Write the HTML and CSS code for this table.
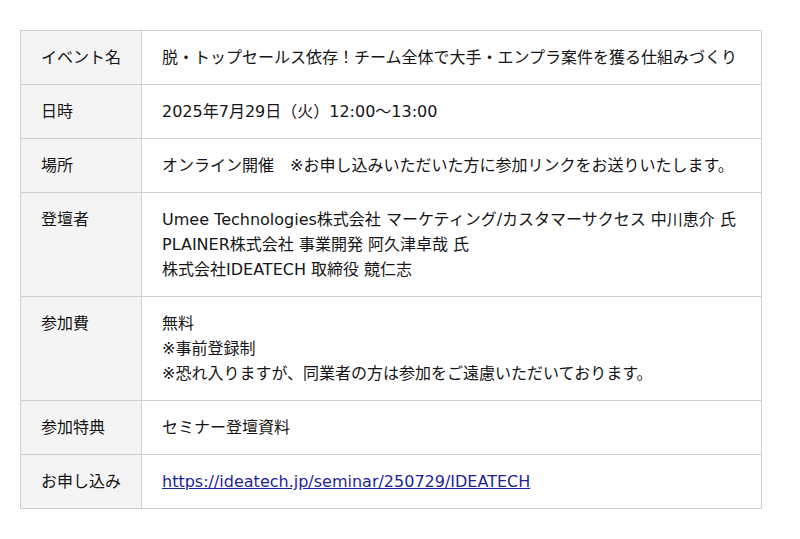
FILE: index.html
```html
<!DOCTYPE html>
<html lang="ja">
<head>
	<meta charset="UTF-8">
	<title>セミナー概要</title>
	<link rel="stylesheet" href="styles.css">
</head>
<body>
	<table class="outline">
		<tr>
			<th>イベント名</th>
			<td>脱・トップセールス依存！チーム全体で大手・エンプラ案件を獲る仕組みづくり</td>
		</tr>
		<tr>
			<th>日時</th>
			<td>2025年7月29日（火）12:00〜13:00</td>
		</tr>
		<tr>
			<th>場所</th>
			<td>オンライン開催　※お申し込みいただいた方に参加リンクをお送りいたします。</td>
		</tr>
		<tr>
			<th>登壇者</th>
			<td>Umee Technologies株式会社 マーケティング/カスタマーサクセス 中川恵介 氏<br>PLAINER株式会社 事業開発 阿久津卓哉 氏<br>株式会社IDEATECH 取締役 競仁志</td>
		</tr>
		<tr>
			<th>参加費</th>
			<td>無料<br>※事前登録制<br>※恐れ入りますが、同業者の方は参加をご遠慮いただいております。</td>
		</tr>
		<tr>
			<th>参加特典</th>
			<td>セミナー登壇資料</td>
		</tr>
		<tr>
			<th>お申し込み</th>
			<td><a href="#">https://ideatech.jp/seminar/250729/IDEATECH</a></td>
		</tr>
	</table>
</body>
</html>
```

FILE: styles.css
```css
*{
	margin: 0;
	padding: 0;
	box-sizing: border-box;
}
body{
	background: #fff;
	padding: 30px 20px;
	font-family: "DejaVu Sans", "Noto Sans CJK JP", sans-serif;
	font-size: 16px;
	line-height: 25px;
	color: #151515;
}
.outline{
	table-layout: fixed;
	width: 742px;
	border-collapse: collapse;
}
.outline th, .outline td{
	border: 1px solid #cfcfcf;
	padding: 14px 20px;
	vertical-align: top;
	text-align: left;
	font-weight: normal;
	white-space: nowrap;
}
.outline th{
	width: 121px;
	background: #f4f4f4;
}
.outline a{
	color: #1f1f96;
}
```
